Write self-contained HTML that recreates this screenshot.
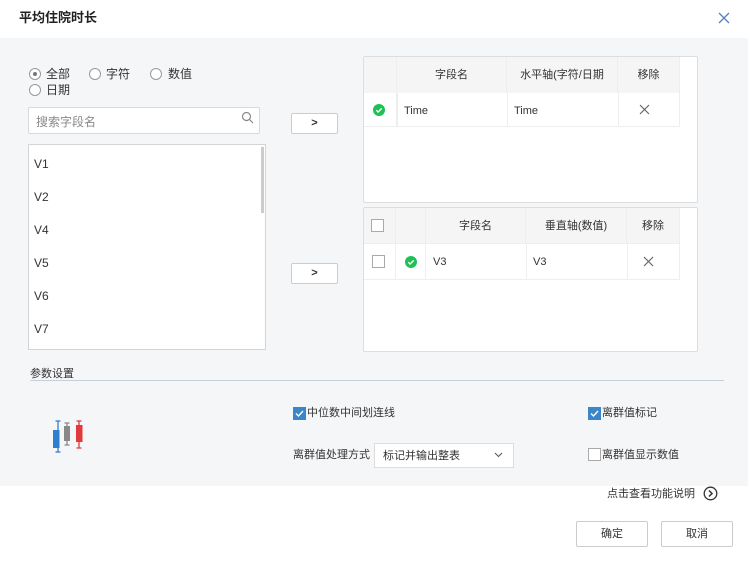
<!DOCTYPE html>
<html><head><meta charset="utf-8"><style>
*{margin:0;padding:0;box-sizing:border-box}
body{width:750px;height:561px;position:relative;background:#fff;font-family:"Liberation Sans","Noto Sans CJK SC",sans-serif;font-size:12px;color:#333;overflow:hidden}
.a{position:absolute}
.t{position:absolute;white-space:nowrap;line-height:14px}
.radio{position:absolute;width:12px;height:12px;border:1px solid #999;border-radius:50%;background:#fff}
.cb{position:absolute;width:13px;height:13px;border:1px solid #aaa;background:#fff}
.cbon{position:absolute;width:13px;height:13px;background:#3a86c8}
.btn{position:absolute;border:1px solid #ccc;background:#fff;border-radius:2px;text-align:center;font-size:11px}
.cell{position:absolute;border-right:1px solid #eee;text-align:center;font-size:11px}
.ok{position:absolute;width:12px;height:12px;border-radius:50%;background:#1fc055}
</style></head><body>
<div class="t" style="left:19px;top:11px;font-size:13px;font-weight:bold;color:#222">平均住院时长</div>
<svg class="a" style="left:718px;top:12px" width="12" height="12"><path d="M1 1l10 10M11 1L1 11" stroke="#5a7cc0" stroke-width="1.3"/></svg>
<div class="a" style="left:0;top:38px;width:748px;height:448px;background:#f5f6f8"></div>

<div class="radio" style="left:29px;top:68px"><div class="a" style="left:3px;top:3px;width:4px;height:4px;border-radius:50%;background:#777"></div></div>
<div class="t" style="left:46px;top:67px">全部</div>
<div class="radio" style="left:89px;top:68px"></div><div class="t" style="left:106px;top:67px">字符</div>
<div class="radio" style="left:150px;top:68px"></div><div class="t" style="left:168px;top:67px">数值</div>
<div class="radio" style="left:29px;top:84px"></div><div class="t" style="left:46px;top:83px">日期</div>

<div class="a" style="left:28px;top:107px;width:232px;height:27px;background:#fff;border:1px solid #d6d9de;border-radius:2px"></div>
<div class="t" style="left:36px;top:115px;color:#888">搜索字段名</div>
<svg class="a" style="left:241px;top:111px" width="14" height="14"><circle cx="5.5" cy="5.5" r="4" fill="none" stroke="#888" stroke-width="1.2"/><path d="M8.5 8.5L12 12" stroke="#888" stroke-width="1.2"/></svg>

<div class="a" style="left:28px;top:144px;width:238px;height:206px;background:#fff;border:1px solid #d4d4d4"></div>
<div class="a" style="left:261px;top:147px;width:3px;height:66px;background:#ccc"></div>
<div class="t" style="left:34px;top:157px">V1</div>
<div class="t" style="left:34px;top:190px">V2</div>
<div class="t" style="left:34px;top:223px">V4</div>
<div class="t" style="left:34px;top:256px">V5</div>
<div class="t" style="left:34px;top:289px">V6</div>
<div class="t" style="left:34px;top:322px">V7</div>

<div class="btn" style="left:291px;top:113px;width:47px;height:21px;line-height:18px;font-weight:bold">&gt;</div>
<div class="btn" style="left:291px;top:263px;width:47px;height:21px;line-height:18px;font-weight:bold">&gt;</div>

<div class="a" style="left:363px;top:56px;width:335px;height:147px;background:#fff;border:1px solid #ddd;border-radius:2px"></div>
<div class="a" style="left:364px;top:57px;width:316px;height:36px;background:#f5f5f5"></div>
<div class="cell" style="left:364px;top:57px;width:33px;height:70px"></div>
<div class="cell" style="left:397px;top:57px;width:110px;height:36px;line-height:36px">字段名</div>
<div class="cell" style="left:507px;top:57px;width:111px;height:36px;line-height:36px">水平轴(字符/日期</div>
<div class="cell" style="left:618px;top:57px;width:62px;height:36px;line-height:36px">移除</div>
<div class="a" style="left:397px;top:93px;width:1px;height:34px;background:#eee"></div>
<div class="a" style="left:507px;top:93px;width:1px;height:34px;background:#eee"></div>
<div class="a" style="left:618px;top:93px;width:1px;height:34px;background:#eee"></div>
<div class="a" style="left:679px;top:93px;width:1px;height:34px;background:#eee"></div>
<div class="a" style="left:364px;top:126px;width:316px;height:1px;background:#eee"></div>
<div class="ok" style="left:373px;top:104px"><svg width="12" height="12"><path d="M3.3 6.2l1.8 1.8 3.6-3.6" stroke="#fff" stroke-width="1.4" fill="none"/></svg></div>
<div class="t" style="left:404px;top:104px;font-size:11px">Time</div>
<div class="t" style="left:514px;top:104px;font-size:11px">Time</div>
<svg class="a" style="left:639px;top:104px" width="11" height="11"><path d="M1 1l9 9M10 1L1 10" stroke="#666" stroke-width="1.2"/></svg>

<div class="a" style="left:363px;top:207px;width:335px;height:145px;background:#fff;border:1px solid #ddd;border-radius:2px"></div>
<div class="a" style="left:364px;top:208px;width:316px;height:36px;background:#f5f5f5"></div>
<div class="cell" style="left:364px;top:208px;width:32px;height:72px"></div>
<div class="cell" style="left:396px;top:208px;width:30px;height:72px"></div>
<div class="cell" style="left:426px;top:208px;width:100px;height:36px;line-height:36px">字段名</div>
<div class="cell" style="left:526px;top:208px;width:101px;height:36px;line-height:36px">垂直轴(数值)</div>
<div class="cell" style="left:627px;top:208px;width:53px;height:36px;line-height:36px">移除</div>
<div class="a" style="left:526px;top:244px;width:1px;height:36px;background:#eee"></div>
<div class="a" style="left:627px;top:244px;width:1px;height:36px;background:#eee"></div>
<div class="a" style="left:679px;top:244px;width:1px;height:36px;background:#eee"></div>
<div class="a" style="left:364px;top:243px;width:316px;height:1px;background:#eee"></div>
<div class="a" style="left:364px;top:279px;width:316px;height:1px;background:#eee"></div>
<div class="cb" style="left:371px;top:219px"></div>
<div class="cb" style="left:372px;top:255px"></div>
<div class="ok" style="left:405px;top:256px"><svg width="12" height="12"><path d="M3.3 6.2l1.8 1.8 3.6-3.6" stroke="#fff" stroke-width="1.4" fill="none"/></svg></div>
<div class="t" style="left:433px;top:255px;font-size:11px">V3</div>
<div class="t" style="left:533px;top:255px;font-size:11px">V3</div>
<svg class="a" style="left:643px;top:256px" width="11" height="11"><path d="M1 1l9 9M10 1L1 10" stroke="#666" stroke-width="1.2"/></svg>

<div class="t" style="left:30px;top:367px;font-size:11px">参数设置</div>
<div class="a" style="left:30px;top:380px;width:694px;height:1px;background:#c8cfdb"></div>

<svg class="a" style="left:50px;top:418px" width="36" height="40">
<g stroke="#2f7fd0" fill="#2f7fd0" stroke-width="1.3"><path d="M5.5 3h5M8 3v31M5.5 34h5" fill="none"/><rect x="3" y="12" width="6.5" height="18" stroke="none"/></g>
<g stroke="#888" fill="#888" stroke-width="1.3"><path d="M14.5 5h5M17 5v22M14.5 27h5" fill="none"/><rect x="14" y="8" width="6" height="15" stroke="none"/></g>
<g stroke="#e03b3b" fill="#e03b3b" stroke-width="1.3"><path d="M26.5 3h5M29 3v27M26.5 30h5" fill="none"/><rect x="26" y="7" width="6.5" height="17" stroke="none"/></g>
</svg>

<div class="cbon" style="left:293px;top:407px"><svg width="13" height="13"><path d="M3 6.5l2.5 2.5 4.5-5" stroke="#fff" stroke-width="1.4" fill="none"/></svg></div>
<div class="t" style="left:307px;top:406px;font-size:11px">中位数中间划连线</div>
<div class="cbon" style="left:588px;top:407px"><svg width="13" height="13"><path d="M3 6.5l2.5 2.5 4.5-5" stroke="#fff" stroke-width="1.4" fill="none"/></svg></div>
<div class="t" style="left:602px;top:406px;font-size:11px">离群值标记</div>

<div class="t" style="left:293px;top:448px;font-size:11px">离群值处理方式</div>
<div class="a" style="left:374px;top:443px;width:140px;height:25px;background:#fff;border:1px solid #ddd"></div>
<div class="t" style="left:383px;top:449px;font-size:11px">标记并输出整表</div>
<svg class="a" style="left:494px;top:452px" width="9" height="6"><path d="M1 1l3.5 3.5L8 1" stroke="#555" fill="none"/></svg>
<div class="cb" style="left:588px;top:448px"></div>
<div class="t" style="left:602px;top:448px;font-size:11px">离群值显示数值</div>

<div class="t" style="left:607px;top:487px;font-size:11px">点击查看功能说明</div>
<svg class="a" style="left:703px;top:486px" width="15" height="15"><circle cx="7.5" cy="7.5" r="6.3" fill="none" stroke="#333" stroke-width="1.3"/><path d="M6 4.5l3 3-3 3" stroke="#333" stroke-width="1.5" fill="none"/></svg>

<div class="btn" style="left:576px;top:521px;width:72px;height:26px;line-height:24px">确定</div>
<div class="btn" style="left:661px;top:521px;width:72px;height:26px;line-height:24px">取消</div>
</body></html>
